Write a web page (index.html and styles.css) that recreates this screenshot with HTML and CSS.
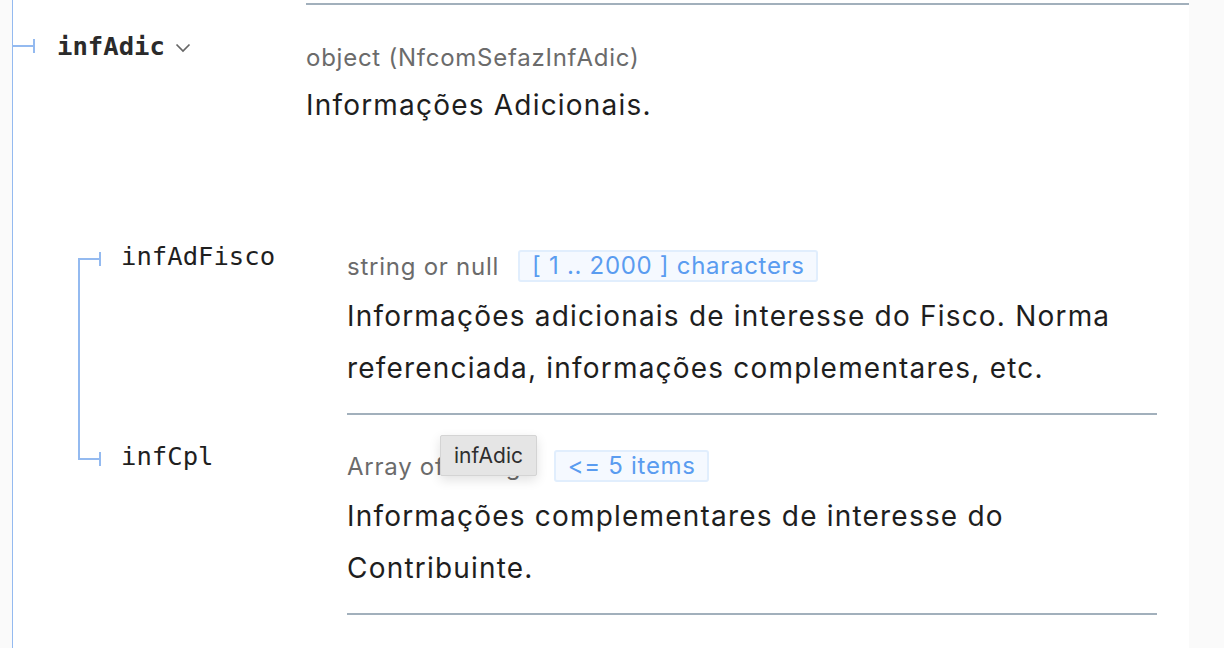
FILE: index.html
```html
<!DOCTYPE html>
<html lang="pt">
<head>
<meta charset="utf-8">
<title>infAdic</title>
<link rel="stylesheet" href="styles.css">
</head>
<body>
<div class="page">
  <div class="gutter-left"></div>
  <div class="main">
    <div class="prop-row top-row">
      <div class="name-cell top-name">
        <span class="prop-name bold">infAdic</span>
        <svg class="chevron" width="16" height="10" viewBox="0 0 16 10"><polyline points="1.5,1.5 8,8 14.5,1.5" fill="none" stroke="#666" stroke-width="1.7"/></svg>
      </div>
      <div class="desc-cell top-desc">
        <div class="type-line"><span class="type">object (NfcomSefazInfAdic)</span></div>
        <p class="desc">Informações Adicionais.</p>
      </div>
    </div>
    <div class="nested">
      <div class="prop-row nested-row first">
        <div class="name-cell nested-name">
          <span class="tick"></span>
          <span class="prop-name">infAdFisco</span>
        </div>
        <div class="desc-cell nested-desc">
          <div class="type-line"><span class="type">string or null</span><span class="badge">[ 1 .. 2000 ] characters</span></div>
          <p class="desc">Informações adicionais de interesse do Fisco. Norma referenciada, informações complementares, etc.</p>
        </div>
      </div>
      <div class="prop-row nested-row last">
        <div class="name-cell nested-name">
          <span class="tick"></span>
          <span class="prop-name">infCpl</span>
        </div>
        <div class="desc-cell nested-desc">
          <div class="type-line"><span class="type">Array of strings</span><span class="badge">&lt;= 5 items</span></div>
          <p class="desc">Informações complementares de interesse do Contribuinte.</p>
        </div>
      </div>
    </div>
  </div>
  <div class="gutter-right"></div>
</div>
<div class="tooltip">infAdic</div>
</body>
</html>
```
FILE: styles.css
```css
html, body {
  margin: 0;
  padding: 0;
  background: #ffffff;
  font-family: "Inter", "Noto Sans", sans-serif;
  color: #262626;
}
.page {
  display: flex;
  width: 1224px;
  height: 648px;
  overflow: hidden;
}
.gutter-left {
  width: 12px;
  background: #fafafa;
  flex: none;
}
.gutter-right {
  width: 35px;
  background: #fafafa;
  flex: none;
}
.main {
  flex: 1;
  border-left: 1px solid #94baf0;
  background: #fff;
}
.prop-row {
  display: flex;
}
.name-cell {
  position: relative;
  flex: none;
  display: flex;
  align-items: center;
  height: 32px;
  box-sizing: content-box;
  align-self: flex-start;
}
.top-name {
  width: 249px;
  padding-top: 30px;
  padding-left: 44px;
}
.top-name::after {
  content: "";
  position: absolute;
  left: 0;
  top: 45px;
  width: 21px;
  height: 2px;
  background: #94baf0;
}
.top-name::before {
  content: "";
  position: absolute;
  left: 20px;
  top: 39px;
  width: 2px;
  height: 14px;
  background: #94baf0;
}
.prop-name {
  font-family: "DejaVu Sans Mono", "Liberation Mono", monospace;
  font-size: 25.6px;
  color: #1f1f1f;
  line-height: 32px;
}
.prop-name.bold {
  font-weight: bold;
  color: #2b2b2b;
}
.chevron {
  margin-left: 10px;
  margin-top: 3px;
}
.desc-cell {
  flex: 1;
}
.top-desc {
  margin-top: 3px;
  border-top: 2px solid #a2b0bc;
  padding-top: 36px;
  padding-bottom: 84px;
}
.type-line {
  display: flex;
  align-items: center;
  height: 32px;
}
.type {
  font-size: 24px;
  letter-spacing: 0.75px;
  color: #6b6b6b;
  margin-right: 19px;
}
.badge {
  font-size: 24px;
  letter-spacing: 0.7px;
  color: #5a9cf0;
  background: #f5f9ff;
  border: 2px solid #e1eefd;
  border-radius: 3px;
  padding: 0 11px 0 12px;
  height: 28px;
  line-height: 28px;
}
.desc {
  margin: 0;
  font-size: 28px;
  letter-spacing: 1.2px;
  line-height: 52px;
  color: #1e1e1e;
}
.top-desc .desc {
  margin-top: 6px;
}
.nested {
  margin-left: 65px;
  margin-right: 32px;
}
.nested-name {
  width: 226px;
  padding-left: 43px;
  padding-top: 25px;
}
.nested-name::after {
  content: "";
  position: absolute;
  left: 0;
  top: 43px;
  width: 22px;
  height: 2px;
  background: #94baf0;
}
.nested-name::before {
  content: "";
  position: absolute;
  left: 0;
  width: 2px;
  background: #94baf0;
}
.nested-row.first .nested-name::before {
  top: 43px;
  height: 202px;
}
.nested-row.last .nested-name::before {
  top: 0;
  height: 45px;
}
.tick {
  position: absolute;
  left: 21px;
  top: 37px;
  width: 2px;
  height: 14px;
  background: #94baf0;
}
.nested-desc {
  padding-top: 35px;
  padding-bottom: 19px;
  border-bottom: 2px solid #a2b0bc;
}
.nested-desc .desc {
  margin-top: 8px;
}
.tooltip {
  position: absolute;
  left: 440px;
  top: 435px;
  width: 97px;
  height: 41px;
  box-sizing: border-box;
  background: #e5e5e5;
  border: 1px solid #d4d4d4;
  border-radius: 2px;
  box-shadow: 0 4px 12px rgba(0,0,0,0.12);
  font-family: "Inter", sans-serif;
  font-size: 21px;
  color: #2e2e2e;
  display: flex;
  align-items: center;
  justify-content: center;
}
```
